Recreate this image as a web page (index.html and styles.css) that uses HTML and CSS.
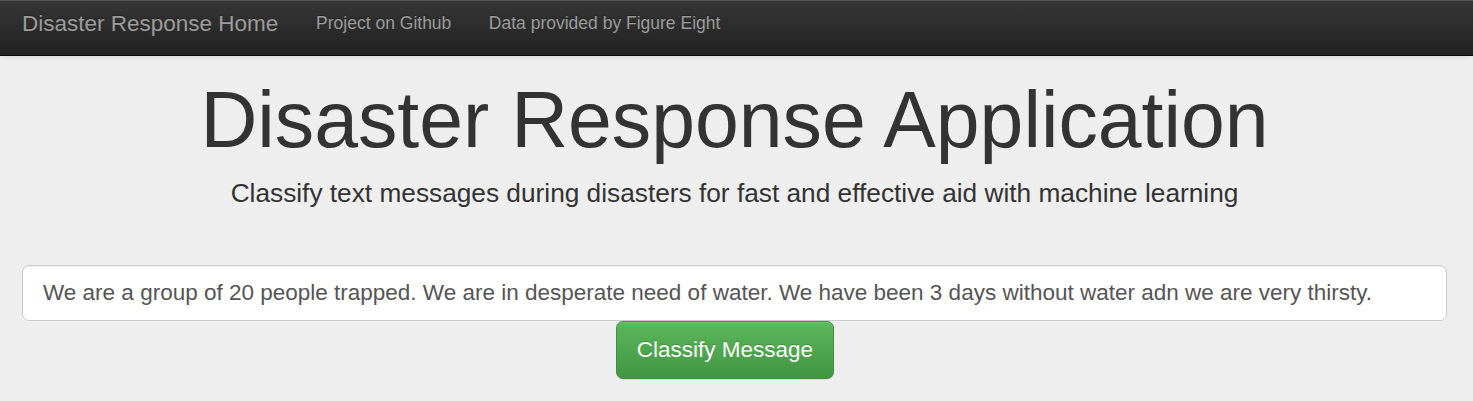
FILE: index.html
```html
<!DOCTYPE html>
<html lang="en">
<head>
<meta charset="utf-8">
<title>Disaster Response Application</title>
<link rel="stylesheet" href="styles.css">
</head>
<body>
<nav class="navbar">
  <a class="brand" href="#">Disaster Response Home</a>
  <ul class="nav-links">
    <li><a href="#">Project on Github</a></li>
    <li><a href="#">Data provided by Figure Eight</a></li>
  </ul>
</nav>
<main class="jumbotron">
  <h1 class="title">Disaster Response Application</h1>
  <p class="subtitle">Classify text messages during disasters for fast and effective aid with machine learning</p>
  <form class="classify-form">
    <input class="message-input" type="text" name="query" value="We are a group of 20 people trapped. We are in desperate need of water. We have been 3 days without water adn we are very thirsty.">
    <button class="btn-classify" type="submit">Classify Message</button>
  </form>
</main>
</body>
</html>
```

FILE: styles.css
```css
* { box-sizing: border-box; }
html, body {
  margin: 0;
  padding: 0;
  background: #eeeeee;
  font-family: "Liberation Sans", Arial, Helvetica, sans-serif;
  color: #333;
}
body {
  height: 401px;
  overflow: hidden;
}
.navbar {
  height: 56px;
  display: flex;
  align-items: center;
  padding: 0 0 9px 22px;
  background-image: linear-gradient(to bottom, #363636 0%, #222222 100%);
  border-bottom: 1px solid #080808;
  box-shadow: inset 0 1px 0 rgba(255,255,255,.15), 0 1px 5px rgba(0,0,0,.1);
}
.brand {
  font-size: 22.5px;
  line-height: 25px;
  color: #9d9d9d;
  text-decoration: none;
  text-shadow: 0 -1px 0 rgba(0,0,0,.25);
  margin-right: 19px;
}
.nav-links {
  list-style: none;
  margin: 0;
  padding: 0;
  display: flex;
}
.nav-links a {
  display: block;
  padding: 0 18.75px;
  font-size: 17.5px;
  line-height: 25px;
  color: #9d9d9d;
  text-decoration: none;
  text-shadow: 0 -1px 0 rgba(0,0,0,.25);
}
.jumbotron {
  padding: 21px 26px 0 22px;
  text-align: center;
}
.title {
  margin: 0;
  font-size: 78.75px;
  line-height: 1.1;
  font-weight: 400;
  color: #333;
}
.subtitle {
  margin: 11.5px 0 0;
  font-size: 26.25px;
  line-height: 36.75px;
  color: #333;
}
.classify-form {
  margin-top: 53px;
  display: grid;
  grid-template-columns: repeat(12, 1fr);
}
.message-input {
  grid-column: 1 / -1;
  display: block;
  width: 100%;
  height: 56px;
  padding: 0 20px;
  font-family: inherit;
  font-size: 22.5px;
  color: #555;
  background: #fff;
  border: 1px solid #ccc;
  border-radius: 7px;
  box-shadow: inset 0 1px 1px rgba(0,0,0,.075);
  outline: none;
}
.btn-classify {
  grid-column: 6 / span 7;
  justify-self: start;
  white-space: nowrap;
  margin-top: 0;
  height: 58px;
  padding: 0 20px;
  font-family: inherit;
  font-size: 22.5px;
  line-height: 30px;
  color: #fff;
  background-image: linear-gradient(to bottom, #5cb85c 0%, #419641 100%);
  border: 1px solid #3e8f3e;
  border-radius: 7px;
  text-shadow: 0 -1px 0 rgba(0,0,0,.2);
  box-shadow: inset 0 1px 0 rgba(255,255,255,.15), 0 1px 1px rgba(0,0,0,.075);
  cursor: pointer;
}
```
